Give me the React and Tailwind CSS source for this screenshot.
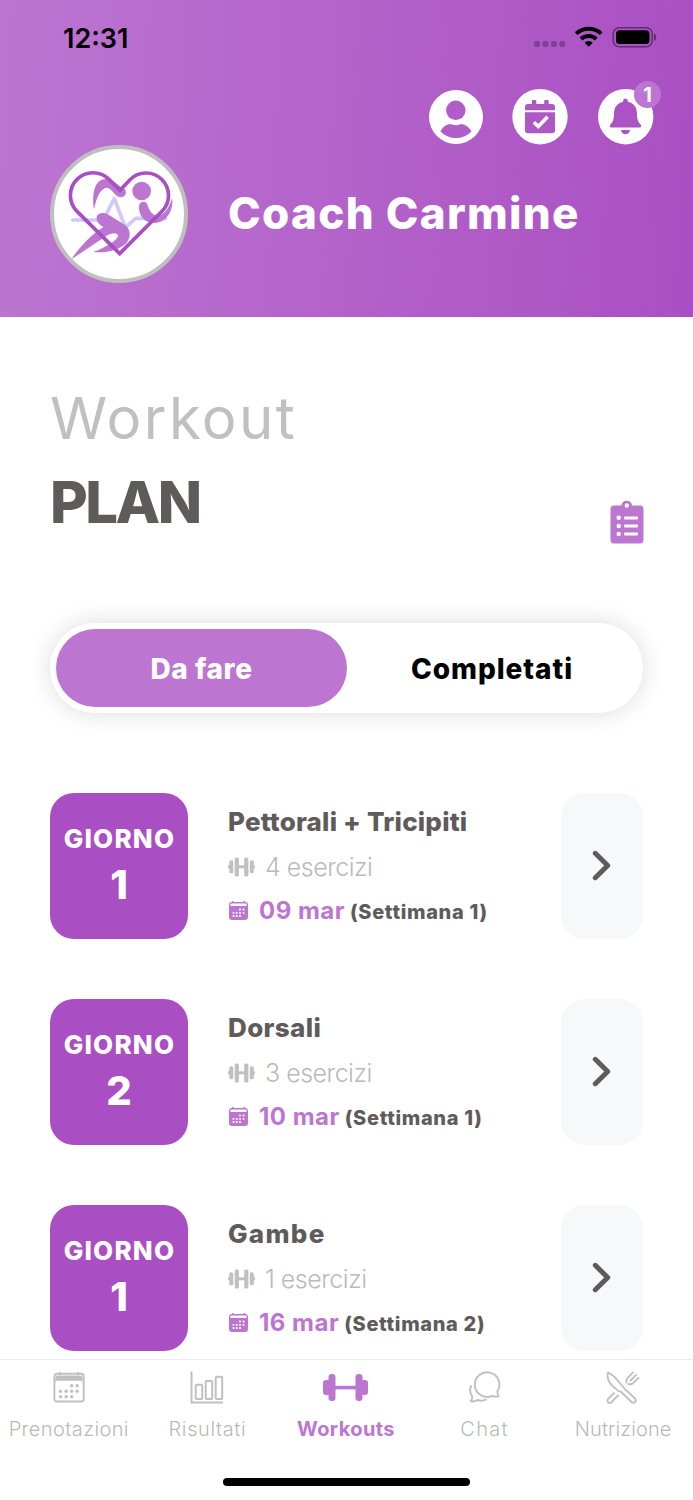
import React from 'react';

const days = [
  { day: '1', title: 'Pettorali + Tricipiti', spacing: 'tracking-[0.2px]', count: '4 esercizi', date: '09 mar', week: '(Settimana 1)' },
  { day: '2', title: 'Dorsali', spacing: 'tracking-[0.35px]', count: '3 esercizi', date: '10 mar', week: '(Settimana 1)' },
  { day: '1', title: 'Gambe', spacing: 'tracking-[1.3px]', count: '1 esercizi', date: '16 mar', week: '(Settimana 2)' },
];

function StatusIcons() {
  return (
    <svg className="block h-[24px] w-[124px]" viewBox="0 0 124 24">
      <g fill="#000" opacity=".25">
        <rect x="1" y="15" width="6" height="6" rx="2" />
        <rect x="9.5" y="15" width="6" height="6" rx="2" />
        <rect x="18" y="15" width="6" height="6" rx="2" />
        <rect x="26.3" y="15" width="6" height="6" rx="2" />
      </g>
      <g fill="none" stroke="#000" strokeWidth="4">
        <path d="M43.2 7.6a18.2 18.2 0 0 1 25 0" />
        <path d="M48.1 13a11 11 0 0 1 15.2 0" />
      </g>
      <path d="M55.7 20.8l-4-4.1a5.8 5.8 0 0 1 8 0z" fill="#000" />
      <rect x="80.2" y="1.7" width="39" height="19" rx="6" fill="none" stroke="#000" strokeOpacity=".45" strokeWidth="1.5" />
      <rect x="83" y="4.3" width="33.5" height="13.8" rx="3.6" fill="#000" />
      <path d="M121 7.5c3 1 3 6.400 0 7.500z" fill="#000" opacity=".45" />
    </svg>
  );
}

function Logo() {
  return (
    <svg className="block h-[138px] w-[138px]" viewBox="30 30 414 414">
      <circle cx="237" cy="237" r="201" fill="#fff" stroke="#bfbfbf" strokeWidth="12" />
      <path d="M98 255H190L223 190L256 278L287 250H377" fill="none" stroke="#d2c8ff" strokeWidth="11" strokeLinecap="round" strokeLinejoin="round" />
      <g fill="#bc75d1">
        <circle cx="305" cy="168" r="28" />
        <path d="M162 223C155 180 162 132 198 132C225 134 238 158 255 163C263 178 252 190 238 186C222 180 216 160 200 158C182 160 170 185 162 223Z" />
        <path d="M297 214C298 196 319 196 323 210C330 238 345 243 358 242C383 232 390 207 396 190C402 216 385 263 345 264C310 264 296 240 297 214Z" />
        <path d="M170 246C172 232 190 232 202 237L255 270C274 283 272 310 260 323C240 344 200 355 160 351C182 344 198 333 213 325Q240 306 232 298Q224 291 203 300L94 373C106 355 145 303 190 276C176 268 168 258 170 246Z" />
      </g>
      <path d="M239 356L111 229A67 67 0 0 1 207 133L240 166L270 134A67 67 0 0 1 366 229Z" fill="none" stroke="#aa4fc3" strokeWidth="11" />
    </svg>
  );
}

function UserIcon() {
  return (
    <svg className="block h-[54px] w-[54px]" viewBox="0 0 54 54">
      <circle cx="27" cy="27" r="27" fill="#fff" />
      <g fill="#b15dc8">
        <circle cx="26.8" cy="20.3" r="9.7" />
        <path d="M11.300 41.200Q15 35 21 34Q27 36.300 32.500 34Q38.500 35 42.600 41.200Q36.500 48 27 48Q17.500 48 11.300 41.200Z" />
      </g>
    </svg>
  );
}

function CheckIcon() {
  return (
    <svg className="block h-[56px] w-[56px]" viewBox="0 0 56 56">
      <circle cx="28" cy="27.700" r="27.700" fill="#fff" />
      <g fill="#ae58c6">
        <path d="M13 21.300V18q0-3 3-3h3.800v-2.700q0-1.300 1.300-1.300h1.900q1.300 0 1.300 1.300V15h7.900v-2.700q0-1.300 1.300-1.300h1.900q1.300 0 1.300 1.300V15H40q3 0 3 3v3.300z" />
        <path d="M13 23.300h30v18q0 3-3 3H16q-3 0-3-3z" />
      </g>
      <path d="M21.800 33.200l4.500 4.300l9.300-9.700" fill="none" stroke="#fff" strokeWidth="3.600" strokeLinejoin="miter" />
    </svg>
  );
}

function BellIcon() {
  return (
    <svg className="block h-[56px] w-[56px]" viewBox="0 0 56 56">
      <circle cx="27.700" cy="27.700" r="27.700" fill="#fff" />
      <g fill="#ac53c4">
        <path d="M27.500 9.500q2.300 0 2.400 3.200C36.500 14 39 19 39 25c0 7 2 8.500 3.600 10.500 1.200 1.700 .4 3-1.100 3h-28c-1.500 0-2.300-1.300-1.100-3C14 33.500 16 32 16 25c0-6 2.500-11 9.100-12.300q.1-3.200 2.400-3.200z" />
        <path d="M23 41h9q-1 4.300-4.500 4.300T23 41z" />
      </g>
    </svg>
  );
}

function ClipboardIcon() {
  return (
    <svg className="block h-[44px] w-[34px]" viewBox="0 0 34 44">
      <path d="M4 5.500h7.400a5.400 5.400 0 0 1 10.700 0H30q3.500 0 3.500 3.500v31q0 3.500-3.500 3.500H4q-3.500 0-3.500-3.500V9Q.5 5.500 4 5.500z" fill="#bc75d1" />
      <g fill="#fff">
        <circle cx="16.800" cy="5.500" r="2.200" />
        <circle cx="8.700" cy="17.800" r="2.200" />
        <circle cx="8.700" cy="26" r="2.200" />
        <circle cx="8.700" cy="34" r="2.200" />
        <rect x="14" y="16.400" width="14" height="3" rx="1" />
        <rect x="14" y="24.500" width="14" height="3" rx="1" />
        <rect x="14" y="32.500" width="14" height="3" rx="1" />
      </g>
    </svg>
  );
}

function SmallDumbbell() {
  return (
    <svg className="block h-[20px] w-[27px]" viewBox="0 0 27 20" fill="#c0c0c0">
      <rect x="0" y="8" width="3" height="3.500" rx="1" />
      <rect x="1.300" y="3.300" width="4" height="13" rx="1.500" />
      <rect x="6.700" y=".5" width="4.200" height="19" rx="1.500" />
      <rect x="10" y="8.300" width="7" height="3" />
      <rect x="16.200" y=".5" width="4.200" height="19" rx="1.500" />
      <rect x="21.800" y="3.300" width="4" height="13" rx="1.500" />
      <rect x="24" y="8" width="3" height="3.500" rx="1" />
    </svg>
  );
}

const smallDots = [
  [11, 8.500], [14.500, 8.500], [4.500, 11.800], [7.700, 11.800], [11, 11.800], [14.500, 11.800], [4.500, 15], [7.700, 15], [11, 15],
];

function SmallCalendar() {
  return (
    <svg className="ml-[1px] block h-[19px] w-[19px]" viewBox="0 0 19 19">
      <path d="M3 1V0h1.500v1h10V0H16v1q3 .2 3 3v12q0 3-3 3H3q-3 0-3-3V4q0-2.800 3-3z" fill="#bc75d1" />
      <rect x="1.300" y="2.500" width="16.400" height="2.400" rx="1" fill="#fff" />
      {smallDots.map(([x, y]) => <rect key={x + '-' + y} x={x - 0.9} y={y - 0.9} width="1.800" height="1.800" rx=".5" fill="#fff" />)}
    </svg>
  );
}

const calDots = [
  [18.500, 13.300], [24, 13.300], [7.300, 18.800], [12.900, 18.800], [18.500, 18.800], [24, 18.800], [7.300, 24.300], [12.900, 24.300], [18.500, 24.300],
];

function TabCalendar() {
  return (
    <svg className="block h-[34px] w-[34px]" viewBox="-1.200 -1.500 34 34">
      <rect x="1.200" y="1.200" width="29.300" height="27.800" rx="2.500" fill="none" stroke="#c0c0c0" strokeWidth="1.900" />
      <path d="M2.200 9.800V5q0-2 2-2h23q2 0 2 2v4.800l-1.500-1.500H3.700z" fill="#c0c0c0" />
      <path d="M7 -.5v3M25 -.5v3" stroke="#c0c0c0" strokeWidth="2" />
      {calDots.map(([x, y]) => <circle key={x + '-' + y} cx={x} cy={y} r="1.700" fill="#c0c0c0" />)}
    </svg>
  );
}

function TabChart() {
  return (
    <svg className="block h-[34px] w-[34px]" viewBox="0 0 34 34" fill="none" stroke="#c0c0c0" strokeWidth="2">
      <path d="M1.500 .5V31.500H33" />
      <rect x="5.700" y="13.800" width="6.500" height="14.200" rx="1" />
      <rect x="15.700" y="10" width="6.500" height="18" rx="1" />
      <rect x="25.700" y="5.800" width="6.500" height="22.200" rx="1" />
    </svg>
  );
}

function TabDumbbell() {
  return (
    <svg className="block h-[34px] w-[46px]" viewBox="1 0 46 34" fill="#bc75d1">
      <rect x="1" y="9" width="8" height="15" rx="3" />
      <rect x="6.500" y="3" width="7" height="27" rx="3.200" />
      <rect x="12" y="14.800" width="22" height="3.600" />
      <rect x="33.500" y="3" width="7" height="27" rx="3.200" />
      <rect x="38" y="9" width="8" height="15" rx="3" />
    </svg>
  );
}

function TabChat() {
  return (
    <svg className="block h-[34px] w-[34px]" viewBox="0.300 0 34 34" fill="none" stroke="#c0c0c0" strokeWidth="1.900" strokeLinecap="round" strokeLinejoin="round">
      <path d="M29.700 20.300A12.300 12.300 0 1 0 24.400 24.800Q27.400 26.200 30.800 25.300Q29.700 23 29.700 20.300z" />
      <path d="M3.500 15Q.8 20 4.500 25.500Q4.800 28 3 30.300Q6.500 31 9.800 29Q13.500 30.500 18.300 28.700" />
    </svg>
  );
}

function TabFood() {
  return (
    <svg className="block h-[34px] w-[34px]" viewBox="0.500 0 34 34" fill="none" stroke="#c0c0c0" strokeWidth="1.900" strokeLinecap="round" strokeLinejoin="round">
      <path d="M2.500 1.500Q8.500 4.500 13 10.500L18.500 17Q19.200 18.800 21 19.500L29.500 27.500Q31 29.500 29.500 31Q27.800 32.500 26 31L15.500 20.700Q12.500 20.500 10.500 18Q0 10 2.500 1.500z" />
      <path d="M8.500 22.200L2.500 28Q1.200 29.800 2.500 31.200Q4.200 32.600 6 31.200L12.500 24.500" />
      <path d="M27.500 1.500L21.800 7.200Q20.300 9.300 21 11.500M30.500 4L25 9.500M33 7L27.300 12.400Q25.400 13.600 23 13" />
    </svg>
  );
}

function Row({ item }) {
  return (
    <div className="flex h-[146px]">
      <div className="flex w-[138px] flex-col items-center rounded-[24px] bg-[#aa4fc3] pt-[24px] font-extrabold text-white">
        <div className="-mr-px whitespace-nowrap text-[26px] leading-[44px] tracking-[1.200px]">GIORNO</div>
        <div className="text-[40px] leading-[48px]">{item.day}</div>
      </div>
      <div className="ml-[40px] flex w-[333px] flex-col whitespace-nowrap pt-[7px]">
        <div className={`text-[26px] font-extrabold leading-[44px] text-[#5f5b5b] ${item.spacing}`}>{item.title}</div>
        <div className="mt-px flex h-[44px] items-center text-[25px] font-light tracking-[-0.5px] text-[#bababa]">
          <SmallDumbbell />
          <span className="ml-[10px] leading-[44px]">{item.count}</span>
        </div>
        <div className="flex h-[43px] items-center">
          <SmallCalendar />
          <span className="ml-[11px] text-[24px] font-bold leading-[43px] tracking-[0.500px] text-[#bc75d1]">{item.date}</span>
          <span className="ml-[5px] pt-[2px] text-[20px] font-extrabold tracking-[0.650px] text-[#5f5b5b]">{item.week}</span>
        </div>
      </div>
      <div className="flex w-[82px] items-center justify-center rounded-[24px] bg-[#f6f8fa]">
        <svg className="h-[32px] w-[20px]" viewBox="0 0 20 32" fill="none" stroke="#5f5b5b" strokeWidth="5" strokeLinecap="round" strokeLinejoin="round">
          <path d="M3.300 3.300L15.700 15.500L3.300 27.700" />
        </svg>
      </div>
    </div>
  );
}

function Tab({ icon, label, spacing, active }) {
  const tone = active ? 'font-bold text-[#bc75d1]' : 'font-light text-[#bababa]';
  return (
    <div className="flex flex-1 flex-col items-center whitespace-nowrap">
      {icon}
      <span className={`mt-[10px] text-[20px] leading-[28px] ${tone} ${spacing}`}>{label}</span>
    </div>
  );
}

export default function App() {
  return (
    <div className="flex h-[1500px] w-[693px] flex-col overflow-hidden bg-white font-['Inter','Liberation_Sans',sans-serif]">
      <header className="h-[317px] shrink-0 bg-linear-93 from-[#bc75d1] to-[#aa4fc3]">
        <div className="flex h-[89px] items-start justify-between pl-[63px] pr-[36px] pt-[23px]">
          <div className="text-[27px] font-semibold leading-[32px]">12:31</div>
          <div className="pt-[3px]"><StatusIcons /></div>
        </div>
        <div className="flex h-[56px] justify-end pr-[39px]">
          <div className="pt-px"><UserIcon /></div>
          <div className="ml-[29px]"><CheckIcon /></div>
          <div className="relative ml-[30px]">
            <BellIcon />
            <div className="absolute -top-[8px] left-[36px] flex h-[27px] w-[27px] items-center justify-center rounded-full bg-[#bc75d1] text-[20px] font-bold text-white">1</div>
          </div>
        </div>
        <div className="flex items-center pl-[50px]">
          <Logo />
          <h1 className="ml-[40px] -mt-[2px] whitespace-nowrap text-[44px] font-extrabold leading-[60px] tracking-[1.300px] text-white">Coach Carmine</h1>
        </div>
      </header>
      <main className="flex h-[1042px] shrink-0 flex-col px-[50px] pt-[59px]">
        <div className="flex justify-between">
          <div className="whitespace-nowrap text-[58px] leading-[84px]">
            <div className="font-normal tracking-[2.400px] text-[#c0c0c0]">Workout</div>
            <div className="font-extrabold tracking-[-2.500px] text-[#5f5b5b]">PLAN</div>
          </div>
          <div className="-mr-px pt-[124px]"><ClipboardIcon /></div>
        </div>
        <div className="mt-[79px] flex h-[90px] w-[593px] shrink-0 rounded-full bg-white p-[6px] text-[28px] font-extrabold shadow-[0_0_24px_rgba(0,0,0,0.14)]">
          <div className="flex w-[291px] items-center justify-center rounded-full bg-[#bc75d1] pt-px tracking-[0.600px] text-white">Da fare</div>
          <div className="flex flex-1 items-center justify-center pt-px tracking-[0.950px] text-black">Completati</div>
        </div>
        <div className="mt-[80px] flex flex-col gap-[60px]">
          {days.map((item) => <Row key={item.title} item={item} />)}
        </div>
      </main>
      <nav className="flex h-[141px] shrink-0 flex-col items-center border-t border-[#ebebeb] bg-white pt-[11px]">
        <div className="-ml-px flex w-full">
          <Tab icon={<TabCalendar />} label="Prenotazioni" spacing="tracking-[0.4px]" />
          <Tab icon={<TabChart />} label="Risultati" spacing="tracking-[0.6px]" />
          <Tab icon={<TabDumbbell />} label="Workouts" spacing="tracking-[0.4px]" active />
          <Tab icon={<TabChat />} label="Chat" spacing="tracking-[1.3px]" />
          <Tab icon={<TabFood />} label="Nutrizione" spacing="tracking-[0.1px]" />
        </div>
        <div className="mt-[35px] h-[8px] w-[247px] rounded-full bg-black" />
      </nav>
    </div>
  );
}
